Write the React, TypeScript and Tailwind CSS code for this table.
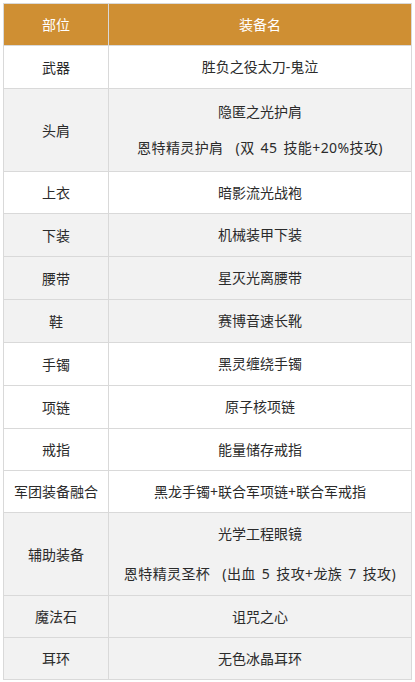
import React from "react";

type Row = {
  part: string;
  items: string[];
  h: string;
  gap?: string;
  gray?: boolean;
};

const rows: Row[] = [
  { part: "武器", items: ["胜负之役太刀-鬼泣"], h: "h-[43px]" },
  { part: "头肩", items: ["隐匿之光护肩", "恩特精灵护肩  (双 45 技能+20%技攻)"], h: "h-[83px]", gap: "gap-[16px]", gray: true },
  { part: "上衣", items: ["暗影流光战袍"], h: "h-[42px]" },
  { part: "下装", items: ["机械装甲下装"], h: "h-[43px]", gray: true },
  { part: "腰带", items: ["星灭光离腰带"], h: "h-[43px]", gray: true },
  { part: "鞋", items: ["赛博音速长靴"], h: "h-[43px]", gray: true },
  { part: "手镯", items: ["黑灵缠绕手镯"], h: "h-[43px]" },
  { part: "项链", items: ["原子核项链"], h: "h-[43px]" },
  { part: "戒指", items: ["能量储存戒指"], h: "h-[42px]" },
  { part: "军团装备融合", items: ["黑龙手镯+联合军项链+联合军戒指"], h: "h-[42px]" },
  { part: "辅助装备", items: ["光学工程眼镜", "恩特精灵圣杯  (出血 5 技攻+龙族 7 技攻)"], h: "h-[83px]", gap: "gap-[20px]", gray: true },
  { part: "魔法石", items: ["诅咒之心"], h: "h-[42px]", gray: true },
  { part: "耳环", items: ["无色冰晶耳环"], h: "h-[41px]", gray: true },
];

export default function App() {
  return (
    <div
      className="min-h-[682px] bg-white pt-[3px] pl-[3px] text-[14px] text-[#2b2b2b]"
      style={{ fontFamily: '"Noto Sans", "Noto Sans CJK SC", sans-serif' }}
    >
      <div className="w-[409px] border border-[#d9d9d9]">
        {/* header */}
        <div className="flex h-[42px] border-b border-[#d9d9d9] bg-[#cf8f33] text-white">
          <div className="flex w-[105px] items-center justify-center border-r border-[#d9d9d9]">部位</div>
          <div className="flex flex-1 items-center justify-center">装备名</div>
        </div>

        {rows.map((r, i) => (
          <div
            key={r.part}
            className={
              "flex " +
              r.h +
              (i < rows.length - 1 ? " border-b border-[#d9d9d9]" : "") +
              (r.gray ? " bg-[#f2f2f2]" : " bg-white")
            }
          >
            <div className="flex w-[105px] items-center justify-center border-r border-[#d9d9d9] whitespace-nowrap">
              {r.part}
            </div>
            <div className={"flex flex-1 flex-col items-center justify-center leading-[20px] " + (r.gap ?? "")}>
              {r.items.map((t, j) => (
                <span
                  key={t}
                  className={"whitespace-pre" + (j > 0 ? " tracking-[0.4px] [word-spacing:2px]" : "")}
                >
                  {t}
                </span>
              ))}
            </div>
          </div>
        ))}
      </div>
    </div>
  );
}
